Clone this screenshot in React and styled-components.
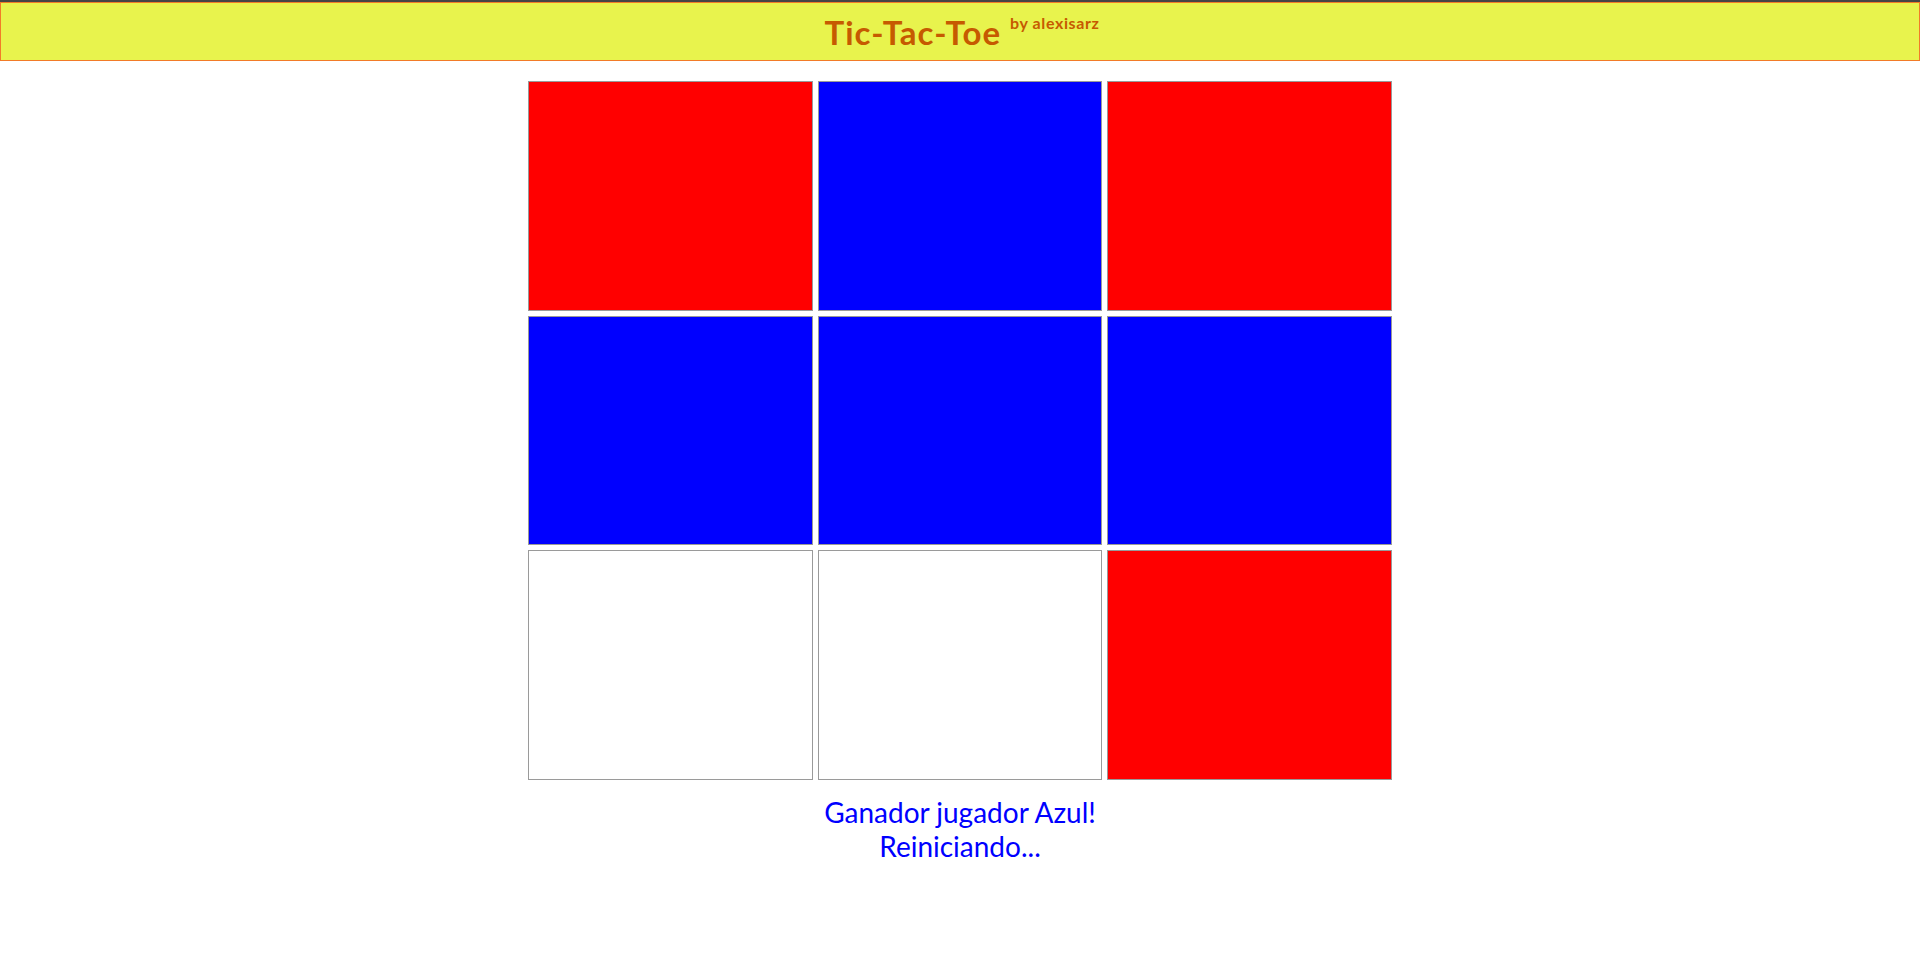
import styled, { createGlobalStyle } from "styled-components";

const board = ["red", "blue", "red", "blue", "blue", "blue", null, null, "red"];

const App = () => {
  return (
    <Page>
      <GlobalStyle />
      <TopStrip />
      <Header>
        <Title>
          Tic-Tac-Toe <Sup>by alexisarz</Sup>
        </Title>
      </Header>

      <Board>
        {board.map((c, i) => (
          <Cell key={i} $color={c} />
        ))}
      </Board>

      <Message>
        Ganador jugador Azul!
        <br />
        Reiniciando...
      </Message>
    </Page>
  );
};

const GlobalStyle = createGlobalStyle`
  html, body {
    margin: 0;
    padding: 0;
    background: #ffffff;
  }
  body {
    font-family: "Gill Sans", Lato, "Open Sans", sans-serif;
  }
`;

const Page = styled.div`
  min-height: 969px;
  display: flex;
  flex-direction: column;
  align-items: center;
`;

const TopStrip = styled.div`
  width: 100%;
  height: 2px;
  background-color: #454545;
`;

const Header = styled.header`
  box-sizing: border-box;
  width: 100%;
  height: 59px;
  border: 1px solid #f27b28;
  background-color: #e8f34d;
  display: flex;
  justify-content: center;
  align-items: flex-start;
`;

const Title = styled.h1`
  margin: 0;
  padding-top: 11px;
  padding-left: 4px;
  font-family: Lato, "Open Sans", sans-serif;
  font-size: 33px;
  font-weight: 700;
  letter-spacing: 1px;
  line-height: 36px;
  color: #c65a00;
  white-space: nowrap;
`;

const Sup = styled.sup`
  font-size: 16px;
  font-weight: 700;
  letter-spacing: 0.6px;
  vertical-align: top;
  position: relative;
  top: -9px;
`;

const Board = styled.div`
  margin-top: 20px;
  display: grid;
  grid-template-columns: repeat(3, 284.67px);
  grid-template-rows: repeat(3, 229.67px);
  gap: 5px;
`;

const Cell = styled.div`
  box-sizing: border-box;
  border: 1px solid #9a9a9a;
  background-color: ${(p) =>
    p.$color === "red" ? "#ff0000" : p.$color === "blue" ? "#0000ff" : "#ffffff"};
`;

const Message = styled.div`
  margin-top: 15px;
  font-family: Lato, "Open Sans", sans-serif;
  font-size: 28px;
  line-height: 34px;
  color: #0000ff;
  text-align: center;
`;

export default App;
